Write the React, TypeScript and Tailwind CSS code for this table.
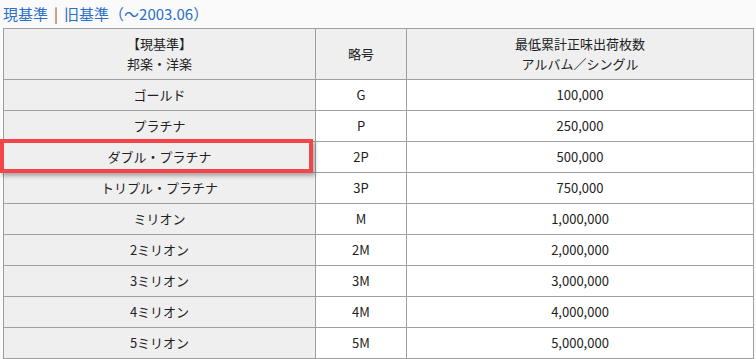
import React from "react";

const rows: [string, string, string][] = [
  ["ゴールド", "G", "100,000"],
  ["プラチナ", "P", "250,000"],
  ["ダブル・プラチナ", "2P", "500,000"],
  ["トリプル・プラチナ", "3P", "750,000"],
  ["ミリオン", "M", "1,000,000"],
  ["2ミリオン", "2M", "2,000,000"],
  ["3ミリオン", "3M", "3,000,000"],
  ["4ミリオン", "4M", "4,000,000"],
  ["5ミリオン", "5M", "5,000,000"],
];

export default function App() {
  return (
    <div
      className="relative w-[756px] h-[359px] overflow-hidden bg-[#fafafa] text-[#222]"
      style={{ fontFamily: '"Noto Sans CJK JP", "Noto Sans", sans-serif' }}
    >
      <div className="h-[28px] pl-[3px] flex items-center text-[15px] leading-[28px] text-[#2a6fc9]">
        <span>現基準</span>
        <span className="mx-[6px] text-[#8a5a2b]">|</span>
        <span>旧基準（～2003.06）</span>
      </div>
      <div className="pl-[3px]">
        <table className="table-fixed border-collapse w-[750px] text-[13px] text-center">
          <colgroup>
            <col className="w-[312px]" />
            <col className="w-[91px]" />
            <col className="w-[347px]" />
          </colgroup>
          <thead>
            <tr className="bg-[#efefef] h-[51px]">
              <th className="border border-[#a0a0a0] font-normal leading-[20px] p-0">
                【現基準】
                <br />
                邦楽・洋楽
              </th>
              <th className="border border-[#a0a0a0] font-normal leading-[20px] p-0">略号</th>
              <th className="border border-[#a0a0a0] font-normal leading-[20px] p-0">
                最低累計正味出荷枚数
                <br />
                アルバム／シングル
              </th>
            </tr>
          </thead>
          <tbody>
            {rows.map(([name, abbr, num]) => (
              <tr key={abbr} className="h-[31px]">
                <td className="border border-[#a0a0a0] bg-[#efefef] p-0 leading-[20px]">{name}</td>
                <td className="border border-[#a0a0a0] bg-white p-0 leading-[20px]">{abbr}</td>
                <td className="border border-[#a0a0a0] bg-white p-0 leading-[20px]">{num}</td>
              </tr>
            ))}
          </tbody>
        </table>
      </div>
      <div className="absolute left-0 top-[139px] w-[313px] h-[34px] border-4 border-[#f4464a] shadow-[2px_3px_4px_rgba(0,0,0,0.3)]" />
    </div>
  );
}
